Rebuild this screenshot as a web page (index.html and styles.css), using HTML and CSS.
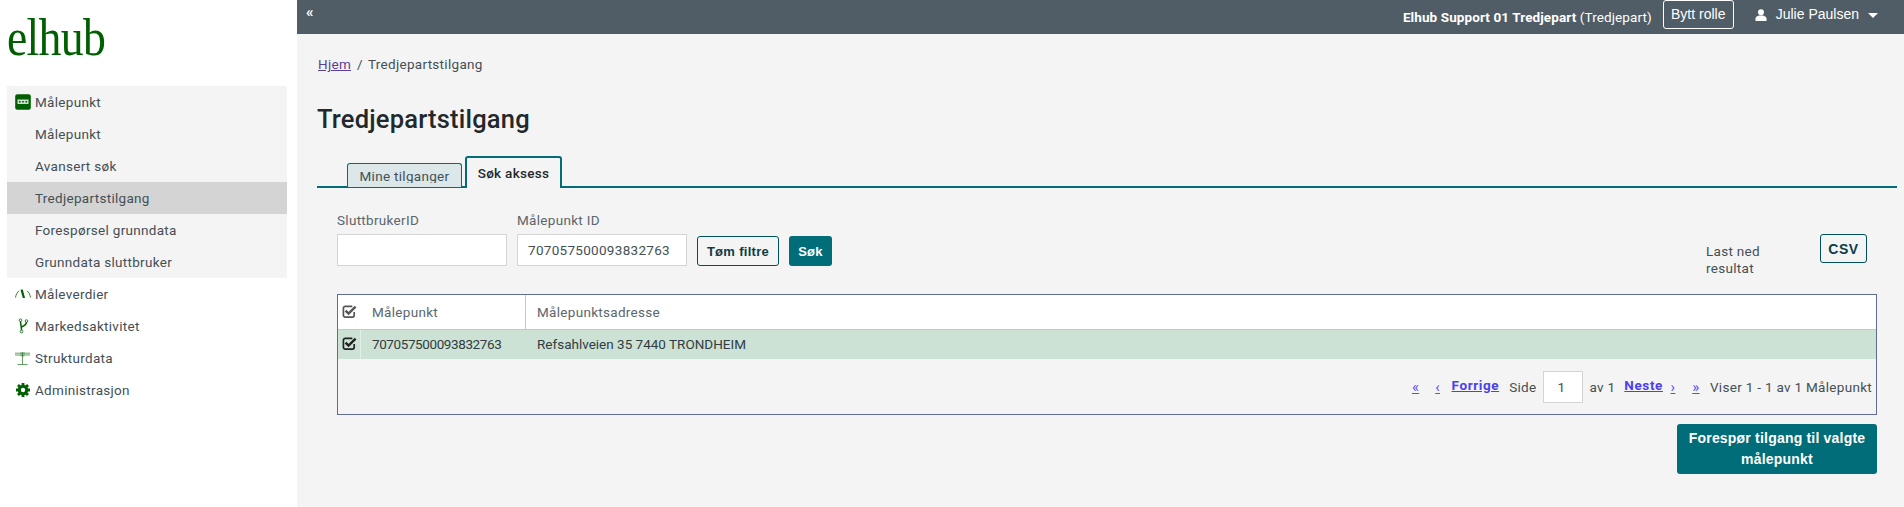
FILE: index.html
```html
<!DOCTYPE html>
<html lang="no">
<head>
<meta charset="utf-8">
<title>Tredjepartstilgang</title>
<link rel="stylesheet" href="styles.css">
</head>
<body>
<aside class="sidebar">
  <div class="logo"><span class="logo-text">elhub</span></div>
  <nav class="menu">
    <div class="group">
      <a class="item"><svg class="ico" viewBox="0 0 16 16"><rect x="0.200" y="0.200" width="15.600" height="15.600" rx="2" fill="#005f00"/><rect x="2.500" y="5.500" width="11" height="4.500" fill="#cfe0cf"/><path d="M4 7h1.600v1.600H4zM7.200 7h1.600v1.600H7.200zM10.400 7H12v1.600h-1.600z" fill="#005f00"/></svg>Målepunkt</a>
      <a class="item sub">Målepunkt</a>
      <a class="item sub">Avansert søk</a>
      <a class="item sub active">Tredjepartstilgang</a>
      <a class="item sub">Forespørsel grunndata</a>
      <a class="item sub">Grunndata sluttbruker</a>
    </div>
    <a class="item"><svg class="ico" viewBox="0 0 16 16"><path d="M0.500 11.500C1 8.500 2.200 6.500 4 4.800" fill="none" stroke="#005f00" stroke-width="0.800"/><path d="M15.500 11.500C15 8.500 14 6.500 12 4.800" fill="none" stroke="#005f00" stroke-width="0.800"/><path d="M5.500 3.800 7.800 3.400 10 12 7.800 12Z" fill="#005f00"/></svg>Måleverdier</a>
    <a class="item"><svg class="ico" viewBox="0 0 16 16"><path d="M5.500 3.500C5.500 6 6.500 8 6.500 12" fill="none" stroke="#005f00" stroke-width="1.500"/><path d="M11.500 4C11.500 7 8.500 8 6.500 9" fill="none" stroke="#005f00" stroke-width="1.500"/><circle cx="5.500" cy="2.200" r="1.300" fill="none" stroke="#005f00" stroke-width="0.800"/><circle cx="11.500" cy="3" r="1.300" fill="none" stroke="#005f00" stroke-width="0.800"/><circle cx="6.500" cy="13.500" r="1.300" fill="none" stroke="#005f00" stroke-width="0.800"/></svg>Markedsaktivitet</a>
    <a class="item"><svg class="ico" viewBox="0 0 16 16"><path d="M7.500 2V14.500M2.500 14.500H12.500M0 3.200H15M0 5H15" fill="none" stroke="#005f00" stroke-width="0.600"/><path d="M6 2V6H9V2" fill="none" stroke="#005f00" stroke-width="0.400"/></svg>Strukturdata</a>
    <a class="item"><svg class="ico" viewBox="0 0 16 16"><circle cx="8" cy="8" r="3.600" fill="none" stroke="#005f00" stroke-width="3.200"/><path d="M8 1V15M1 8H15M3 3L13 13M13 3L3 13" stroke="#005f00" stroke-width="2.800"/><circle cx="8" cy="8" r="2.200" fill="#fff"/></svg>Administrasjon</a>
  </nav>
</aside>
<div class="page">
  <header class="topbar">
    <span class="collapse">«</span>
    <div class="user">
      <span class="org"><b>Elhub Support 01 Tredjepart</b> (Tredjepart)</span>
      <a class="role">Bytt rolle</a>
      <svg class="person" viewBox="0 0 12 12"><circle cx="6" cy="3.200" r="3" fill="#fff"/><path d="M0.500 12V9.500C0.500 7.800 2.500 7 4 6.500H8C9.500 7 11.500 7.800 11.500 9.500V12Z" fill="#fff"/></svg>
      <span class="uname">Julie Paulsen</span>
      <span class="caret"></span>
    </div>
  </header>
  <main class="content">
    <div class="crumbs"><a class="home">Hjem</a><span class="slash">/</span><span>Tredjepartstilgang</span></div>
    <h1 class="title">Tredjepartstilgang</h1>
    <div class="tabs">
      <a class="tab"><span class="tab-clip">Mine tilganger</span></a>
      <a class="tab current">Søk aksess</a>
    </div>
    <section class="panel">
      <div class="toolbar">
        <div class="filters">
          <label class="field"><span class="lbl">SluttbrukerID</span><input class="inp" type="text"></label>
          <label class="field"><span class="lbl">Målepunkt ID</span><input class="inp" type="text" value="707057500093832763"></label>
          <button class="btn outline clear">Tøm filtre</button>
          <button class="btn solid search">Søk</button>
        </div>
        <div class="download">
          <span class="dl-text">Last ned resultat</span>
          <button class="btn outline csv">CSV</button>
        </div>
      </div>
      <div class="grid">
        <div class="row head">
          <div class="c-check"><svg class="chk" viewBox="0 0 16 16"><path d="M13 8.500V12a2 2 0 0 1-2 2H3.500a2 2 0 0 1-2-2V4.500a2 2 0 0 1 2-2H11" fill="none" stroke="#555" stroke-width="1.800"/><path d="M3.800 7 7 10.200 14.500 2.800" fill="none" stroke="#555" stroke-width="2.600"/></svg></div>
          <div class="c-id">Målepunkt</div>
          <div class="c-addr">Målepunktsadresse</div>
        </div>
        <div class="row sel">
          <div class="c-check"><svg class="chk" viewBox="0 0 16 16"><path d="M13 8.500V12a2 2 0 0 1-2 2H3.500a2 2 0 0 1-2-2V4.500a2 2 0 0 1 2-2H11" fill="none" stroke="#222" stroke-width="1.800"/><path d="M3.800 7 7 10.200 14.500 2.800" fill="none" stroke="#222" stroke-width="2.600"/></svg></div>
          <div class="c-id num">707057500093832763</div>
          <div class="c-addr addr">Refsahlveien 35 7440 TRONDHEIM</div>
        </div>
        <div class="pager">
          <a class="pg">«</a><a class="pg lt">‹</a><a class="pgb prev">Forrige</a>
          <span class="side">Side</span><input class="inp pnum" type="text" value="1"><span class="of">av 1</span>
          <a class="pgb next">Neste</a><a class="pg gt">›</a><a class="pg last">»</a>
          <span class="info">Viser 1 - 1 av 1 Målepunkt</span>
        </div>
      </div>
      <div class="actions"><button class="btn solid request">Forespør tilgang til valgte målepunkt</button></div>
    </section>
  </main>
</div>
</body>
</html>
```
FILE: styles.css
```css
* { box-sizing: border-box; }
html, body { margin: 0; height: 507px; overflow: hidden; }
body { display: flex; background: #fff; font-family: Roboto, sans-serif; font-size: 13.500px; letter-spacing: .3px; color: #444f56; }
.sidebar { width: 297px; flex: none; padding: 0 10px 0 7px; background: #fff; }
.logo { height: 86px; padding-top: 8px; font-family: "Liberation Serif", serif; font-size: 52px; line-height: 60px; letter-spacing: -.800px; color: #005f00; }
.logo-text { display: inline-block; transform: scaleX(.88); transform-origin: left center; }
.menu { display: flex; flex-direction: column; }
.group { background: #f4f4f4; }
.item { display: flex; align-items: center; height: 32px; padding-left: 28px; position: relative; }
.ico { position: absolute; left: 8px; top: 8px; width: 16px; height: 16px; }
.active { background: #d4d4d4; }
.page { flex: 1; min-width: 0; display: flex; flex-direction: column; background: #f4f4f4; }
.topbar { height: 34px; flex: none; display: flex; justify-content: space-between; background: #505d66; color: #fff; }
.collapse { padding: 2px 0 0 9px; font-size: 15px; font-weight: 700; line-height: 20px; }
.user { display: flex; align-items: flex-start; padding-right: 26px; }
.org { margin-top: 8px; letter-spacing: .1px; line-height: 18px; }
.org b { font-weight: 700; }
.role { width: 71px; height: 29px; margin-left: 11px; border: 1px solid #fff; border-radius: 3px; font-family: "Liberation Sans", sans-serif; font-size: 14px; letter-spacing: 0; line-height: 26px; text-align: center; }
.person { width: 12px; height: 12px; margin: 9px 0 0 21px; }
.uname { margin: 6px 0 0 9px; font-family: "Liberation Sans", sans-serif; font-size: 14px; letter-spacing: 0; line-height: 16px; }
.caret { margin: 13px 0 0 9px; border-left: 5px solid transparent; border-right: 5px solid transparent; border-top: 5px solid #fff; }
.content { padding: 0 7px 0 20px; }
.crumbs { display: flex; margin: 21px 0 0 1px; height: 18px; line-height: 18px; }
.home { color: #5b3e96; text-decoration: underline; }
.slash { margin: 0 5px 0 6px; }
.title { margin: 29px 0 0 0; font-size: 25.500px; line-height: 34px; font-weight: 500; letter-spacing: .2px; color: #22282c; }
.tabs { display: flex; align-items: flex-end; gap: 3px; margin-top: 19px; height: 33px; padding-left: 30px; border-bottom: 2px solid #016d78; }
.tab { width: 115px; height: 24px; margin-bottom: -1px; overflow: hidden; border: 1px solid #016d78; border-bottom: 0; border-radius: 3px 3px 0 0; background: #dbe7e8; text-align: center; line-height: 24px; }
.tab-clip { display: block; height: 19px; overflow: hidden; }
.current { width: 97px; height: 32px; margin-bottom: -2px; border-width: 2px; border-bottom: 0; background: #f4f4f4; font-weight: 500; color: #22282c; line-height: 30px; }
.panel { padding: 0 20px 0 20px; }
.toolbar { display: flex; justify-content: space-between; height: 106px; }
.filters { display: flex; align-items: flex-start; padding-top: 24px; }
.field { display: flex; flex-direction: column; width: 170px; margin-right: 10px; }
.lbl { height: 22px; line-height: 16px; color: #5b666d; }
.inp { width: 100%; height: 32px; padding: 0 10px; border: 1px solid #d4d4d4; background: #fff; font: inherit; letter-spacing: .3px; color: #444f56; outline: none; }
.btn { font-family: "Liberation Sans", sans-serif; font-weight: 700; font-size: 13px; letter-spacing: .3px; border-radius: 3px; padding: 0; }
.outline { border: 1px solid #014f58; background: transparent; color: #0b3d46; }
.solid { border: 0; background: #016d78; color: #fff; }
.clear { width: 82px; height: 30px; margin: 24px 10px 0 0; }
.search { width: 43px; height: 30px; margin-top: 24px; }
.download { display: flex; align-items: flex-start; padding-top: 46px; margin-right: 10px; }
.dl-text { width: 114px; padding-right: 49px; line-height: 17px; margin-top: 9px; }
.csv { width: 47px; height: 29px; font-size: 14px; letter-spacing: .6px; }
.grid { border: 1px solid #5f6d96; }
.row { display: flex; align-items: center; }
.head { height: 35px; background: #fff; border-bottom: 1px solid #c8c8c8; color: #5b666d; }
.sel { height: 29px; background: #cbe2d5; color: #333c42; }
.c-check { width: 23px; height: 100%; display: flex; align-items: center; padding-left: 4px; flex: none; }
.sel .c-check { border-right: 1px solid #e4efe9; }
.chk { width: 15px; height: 15px; margin-top: -2px; }
.c-id { width: 165px; height: 100%; padding-left: 11px; line-height: 29px; flex: none; }
.head .c-id { border-right: 1px solid #c8c8c8; line-height: 35px; }
.c-addr { padding-left: 11px; line-height: 29px; }
.head .c-addr { line-height: 35px; }
.num { letter-spacing: -.4px; }
.addr { letter-spacing: 0; }
.pager { display: flex; align-items: center; justify-content: flex-end; height: 55px; padding: 0 4px 0 0; }
.pg { width: 8px; margin-left: 16px; text-align: center; color: #5a50f0; text-decoration: underline; font-size: 15px; }
.lt { margin-left: 14px; }
.pgb { color: #4a40f0; font-weight: 700; letter-spacing: .6px; text-decoration: underline; margin-bottom: 3px; }
.prev { margin-left: 10px; }
.side { margin-left: 10px; }
.pnum { width: 40px; margin: 0 6px 0 7px; padding: 0 13px; }
.next { margin-left: 9px; }
.gt { margin-left: 6px; }
.last { margin-left: 15px; }
.info { margin-left: 10px; }
.actions { display: flex; justify-content: flex-end; margin-top: 9px; }
.request { width: 200px; height: 50px; padding: 0 6px; font-size: 14px; letter-spacing: .2px; line-height: 21px; }
```
